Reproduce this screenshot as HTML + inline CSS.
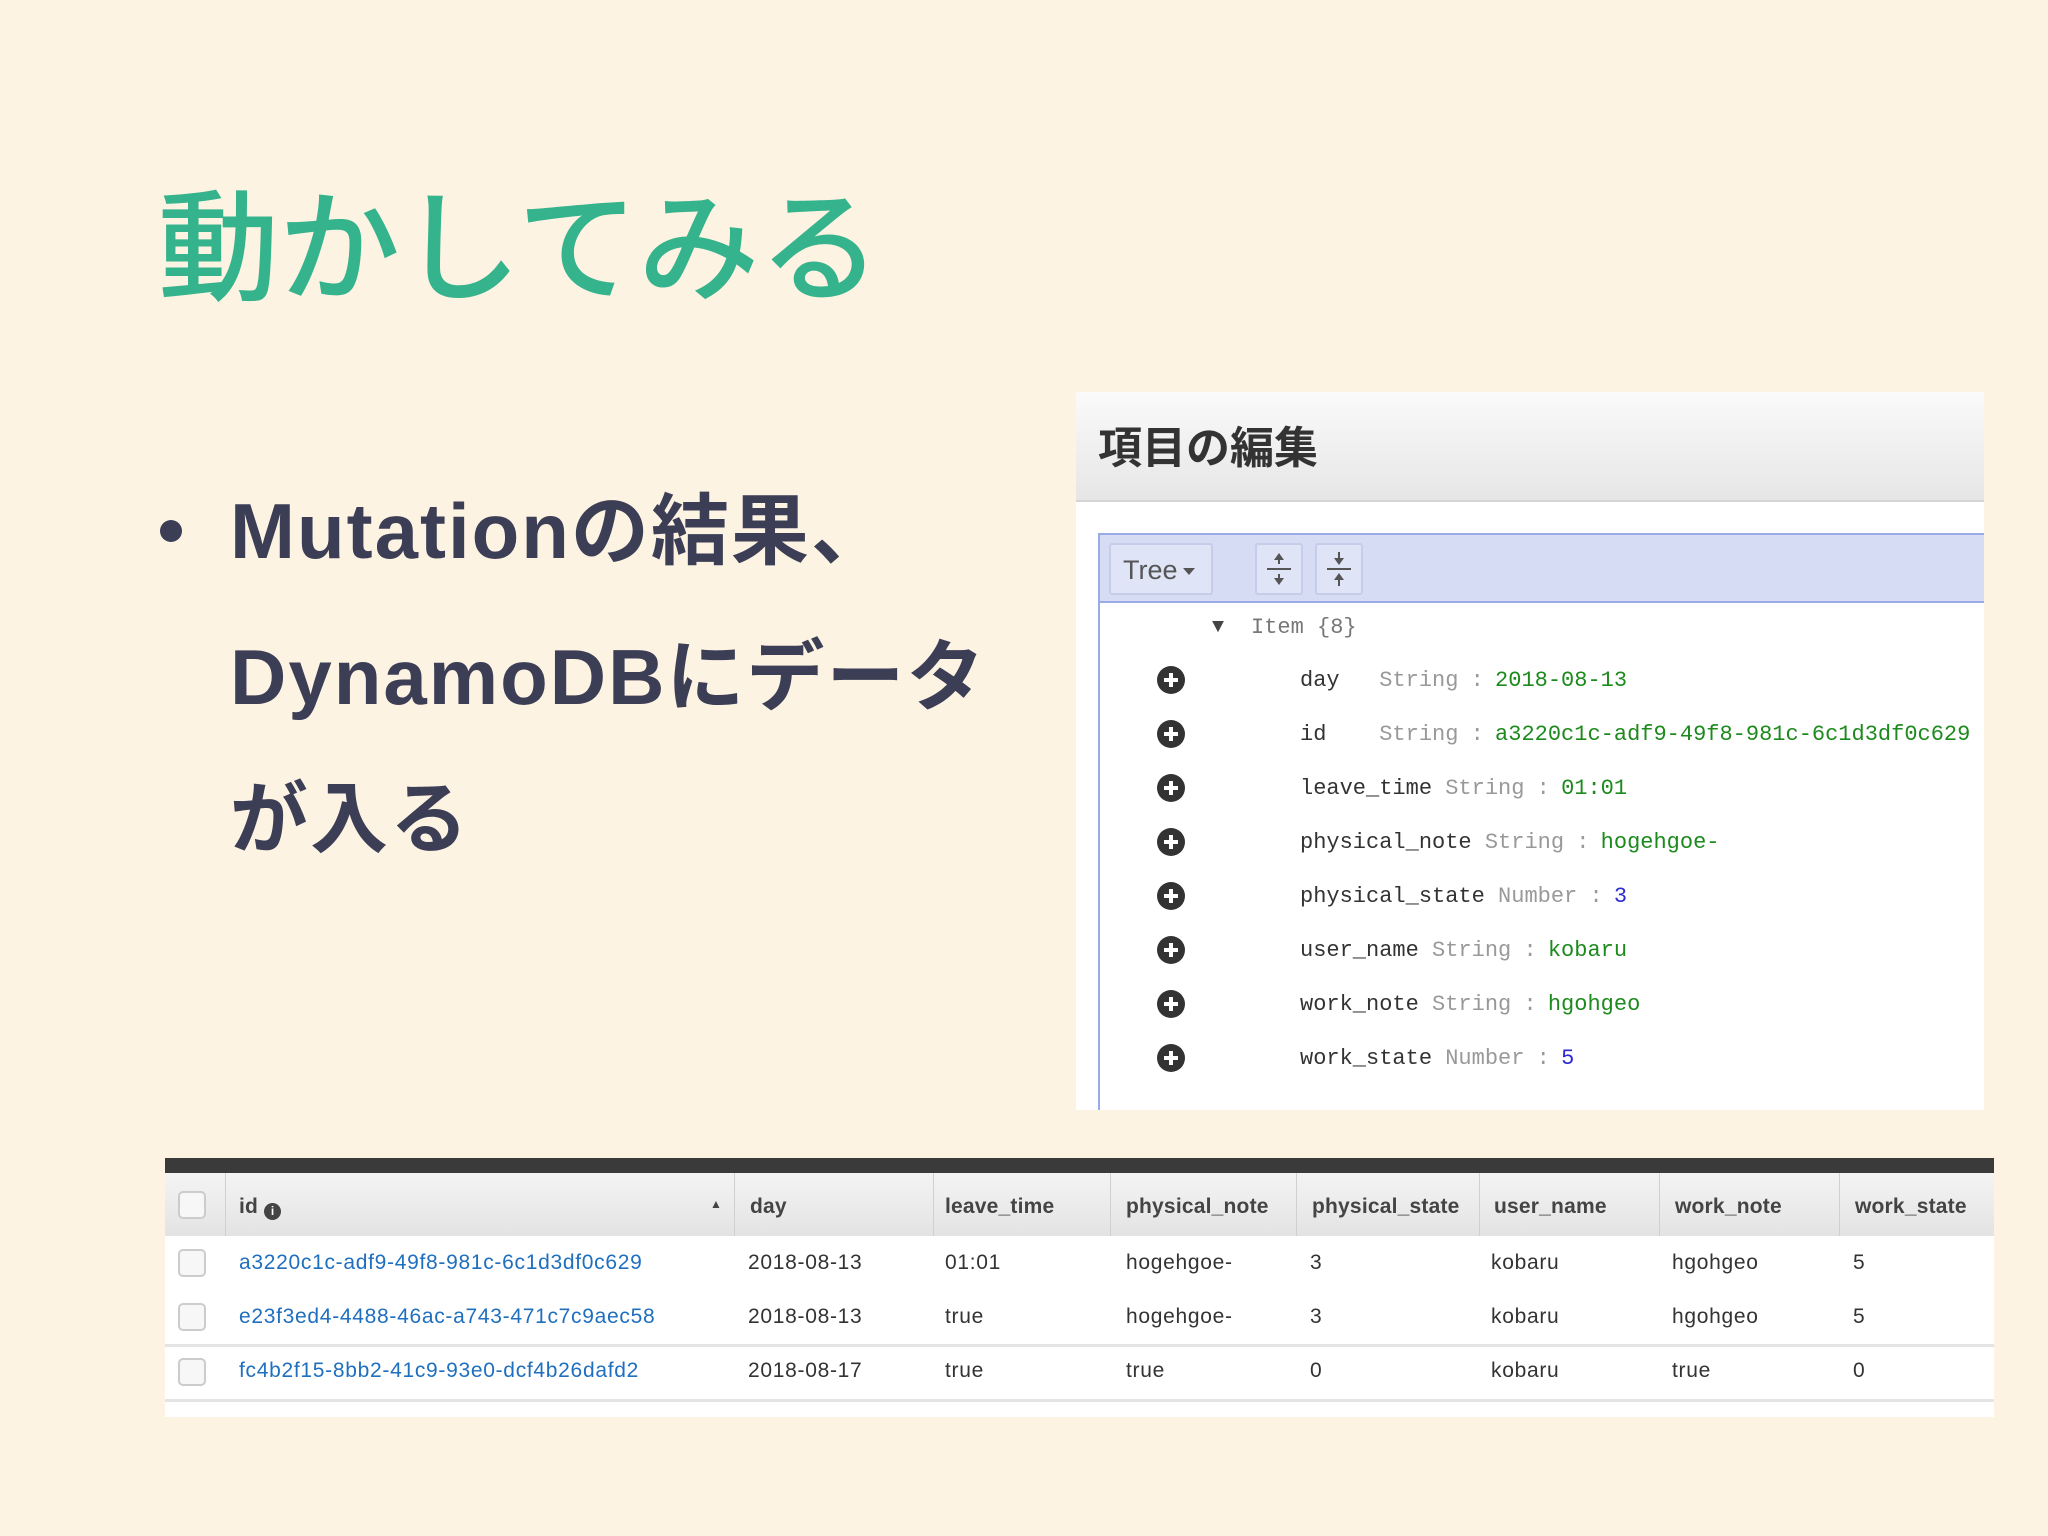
<!DOCTYPE html>
<html><head><meta charset="utf-8"><style>
*{margin:0;padding:0;box-sizing:border-box}
body{width:2048px;height:1536px;background:#fdf3e3;position:relative;overflow:hidden;font-family:"Liberation Sans","Noto Sans CJK JP",sans-serif}
.abs{position:absolute}
#title{left:158px;top:166px;font-size:121px;color:#35b38c;font-family:"Noto Sans CJK JP",sans-serif;font-weight:500;line-height:1.2;white-space:nowrap}
.bl{left:230px;font-size:78px;letter-spacing:2px;color:#3c3e56;font-weight:700;font-family:"Liberation Sans","Noto Sans CJK JP",sans-serif;white-space:nowrap;line-height:1}
.dot{left:160px;top:520px;width:22px;height:22px;border-radius:50%;background:#3c3e56}
#panel{left:1076px;top:392px;width:908px;height:718px;background:#fff;overflow:hidden}
#ph{left:0;top:0;width:908px;height:110px;background:linear-gradient(#fafafa,#e6e6e6);border-bottom:2px solid #d4d4d4}
#ph span{position:absolute;left:22px;top:26px;font-size:44px;font-weight:700;color:#333;font-family:"Noto Sans CJK JP",sans-serif;line-height:1.2}
#tb{left:22px;top:141px;width:886px;height:70px;background:#d6dcf3;border:2px solid #9aaae6;border-right:none}
#vline{left:22px;top:211px;width:2px;height:507px;background:#9aaae6}
.btn{position:absolute;top:8px;height:52px;background:#dfe4f6;border:2px solid #c6cdea;border-radius:3px}
.mono{font-family:"Liberation Mono",monospace;font-size:22px;white-space:pre;line-height:1}
.row{position:absolute;left:224px}
.k{color:#333}.t{color:#999}.g{color:#1d8a1d}.n{color:#2b2bd0}
.cl{color:#999;margin:0 -2px 0 -1px}
.plus{position:absolute;left:81px;width:28px;height:28px;border-radius:50%;background:#333}
.plus:before{content:"";position:absolute;left:7px;top:12px;width:14px;height:4px;background:#fff}
.plus:after{content:"";position:absolute;left:12px;top:7px;width:4px;height:14px;background:#fff}
#tbl{left:165px;top:1158px;width:1829px;height:259px;background:#fff}
#bar{left:0;top:0;width:1829px;height:15px;background:#3a3a3a}
#hd{left:0;top:15px;width:1829px;height:63px;background:linear-gradient(#f4f4f4,#e3e3e3)}
.c{position:absolute;font-size:21px;letter-spacing:0.7px;white-space:nowrap}
.h{font-weight:700;color:#444;top:1195px;letter-spacing:0.2px}
.sep{position:absolute;top:15px;width:1px;height:63px;background:#d0d0d0}
.cb{position:absolute;left:13px;width:28px;height:28px;border:2px solid #ccc;border-radius:5px;background:#f7f7f7}
.hl{position:absolute;left:0;width:1829px;height:3px;background:#e4e4e4}
</style></head><body>
<div id="title" class="abs">動かしてみる</div>
<div class="abs dot"></div>
<div class="abs bl" style="top:492px">Mutationの結果、</div>
<div class="abs bl" style="top:638px">DynamoDBにデータ</div>
<div class="abs bl" style="top:780px">が入る</div>

<div id="panel" class="abs">
 <div id="ph" class="abs"><span>項目の編集</span></div>
 <div id="tb" class="abs">
  <div class="btn" style="left:9px;width:104px"><span style="position:absolute;left:12px;top:10px;font-size:27px;color:#555">Tree</span><span style="position:absolute;left:72px;top:23px;border:6px solid transparent;border-top:7px solid #555"></span></div>
  <div class="btn" style="left:155px;width:48px"><svg width="44" height="48" viewBox="0 0 44 48"><path d="M22 8l-5 7h10zM22 40l-5-7h10z" fill="#555"/><path d="M10 24h24M22 14v5M22 29v5" stroke="#555" stroke-width="2"/></svg></div>
  <div class="btn" style="left:215px;width:48px"><svg width="44" height="48" viewBox="0 0 44 48"><path d="M22 20l-5-7h10zM22 28l-5 7h10z" fill="#555"/><path d="M10 24h24M22 7v6M22 35v6" stroke="#555" stroke-width="2"/></svg></div>
 </div>
 <div id="vline" class="abs"></div>
 <div class="abs mono" style="left:136px;top:226px;color:#444;font-size:20px">▼</div>
 <div class="abs mono t" style="left:175px;top:225px;color:#777">Item {8}</div>
 <div class="plus" style="top:274px"></div><div class="row mono" style="top:278px"><span class="k">day   </span><span class="t">String</span><span class="cl"> : </span><span class="g">2018-08-13</span></div>
 <div class="plus" style="top:328px"></div><div class="row mono" style="top:332px"><span class="k">id    </span><span class="t">String</span><span class="cl"> : </span><span class="g">a3220c1c-adf9-49f8-981c-6c1d3df0c629</span></div>
 <div class="plus" style="top:382px"></div><div class="row mono" style="top:386px"><span class="k">leave_time </span><span class="t">String</span><span class="cl"> : </span><span class="g">01:01</span></div>
 <div class="plus" style="top:436px"></div><div class="row mono" style="top:440px"><span class="k">physical_note </span><span class="t">String</span><span class="cl"> : </span><span class="g">hogehgoe-</span></div>
 <div class="plus" style="top:490px"></div><div class="row mono" style="top:494px"><span class="k">physical_state </span><span class="t">Number</span><span class="cl"> : </span><span class="n">3</span></div>
 <div class="plus" style="top:544px"></div><div class="row mono" style="top:548px"><span class="k">user_name </span><span class="t">String</span><span class="cl"> : </span><span class="g">kobaru</span></div>
 <div class="plus" style="top:598px"></div><div class="row mono" style="top:602px"><span class="k">work_note </span><span class="t">String</span><span class="cl"> : </span><span class="g">hgohgeo</span></div>
 <div class="plus" style="top:652px"></div><div class="row mono" style="top:656px"><span class="k">work_state </span><span class="t">Number</span><span class="cl"> : </span><span class="n">5</span></div>
</div>

<div id="tbl" class="abs">
 <div id="bar" class="abs"></div>
 <div id="hd" class="abs"></div>
 <div class="sep" style="left:60px"></div><div class="sep" style="left:569px"></div><div class="sep" style="left:768px"></div><div class="sep" style="left:945px"></div><div class="sep" style="left:1131px"></div><div class="sep" style="left:1314px"></div><div class="sep" style="left:1494px"></div><div class="sep" style="left:1674px"></div>
 <div class="cb" style="top:33px"></div><div class="cb" style="top:91px"></div><div class="cb" style="top:145px"></div><div class="cb" style="top:200px"></div>
 <div class="hl" style="top:186px"></div><div class="hl" style="top:241px"></div>
</div>
<div class="c h" style="left:239px">id <span style="display:inline-block;width:17px;height:17px;border-radius:50%;background:#444;color:#fff;font-size:12px;text-align:center;line-height:17px;vertical-align:-2px">i</span></div>
<div class="c h" style="left:710px;font-size:12px;top:1197px">▲</div>
<div class="c h" style="left:750px">day</div>
<div class="c h" style="left:945px">leave_time</div>
<div class="c h" style="left:1126px">physical_note</div>
<div class="c h" style="left:1312px">physical_state</div>
<div class="c h" style="left:1494px">user_name</div>
<div class="c h" style="left:1675px">work_note</div>
<div class="c h" style="left:1855px">work_state</div>

<div class="c" style="left:239px;top:1251px;color:#1f6fbf">a3220c1c-adf9-49f8-981c-6c1d3df0c629</div>
<div class="c" style="left:239px;top:1305px;color:#1f6fbf">e23f3ed4-4488-46ac-a743-471c7c9aec58</div>
<div class="c" style="left:239px;top:1359px;color:#1f6fbf">fc4b2f15-8bb2-41c9-93e0-dcf4b26dafd2</div>
<div class="c" style="left:748px;top:1251px;color:#333">2018-08-13</div><div class="c" style="left:748px;top:1305px;color:#333">2018-08-13</div><div class="c" style="left:748px;top:1359px;color:#333">2018-08-17</div>
<div class="c" style="left:945px;top:1251px;color:#333">01:01</div><div class="c" style="left:945px;top:1305px;color:#333">true</div><div class="c" style="left:945px;top:1359px;color:#333">true</div>
<div class="c" style="left:1126px;top:1251px;color:#333">hogehgoe-</div><div class="c" style="left:1126px;top:1305px;color:#333">hogehgoe-</div><div class="c" style="left:1126px;top:1359px;color:#333">true</div>
<div class="c" style="left:1310px;top:1251px;color:#333">3</div><div class="c" style="left:1310px;top:1305px;color:#333">3</div><div class="c" style="left:1310px;top:1359px;color:#333">0</div>
<div class="c" style="left:1491px;top:1251px;color:#333">kobaru</div><div class="c" style="left:1491px;top:1305px;color:#333">kobaru</div><div class="c" style="left:1491px;top:1359px;color:#333">kobaru</div>
<div class="c" style="left:1672px;top:1251px;color:#333">hgohgeo</div><div class="c" style="left:1672px;top:1305px;color:#333">hgohgeo</div><div class="c" style="left:1672px;top:1359px;color:#333">true</div>
<div class="c" style="left:1853px;top:1251px;color:#333">5</div><div class="c" style="left:1853px;top:1305px;color:#333">5</div><div class="c" style="left:1853px;top:1359px;color:#333">0</div>
</body></html>
